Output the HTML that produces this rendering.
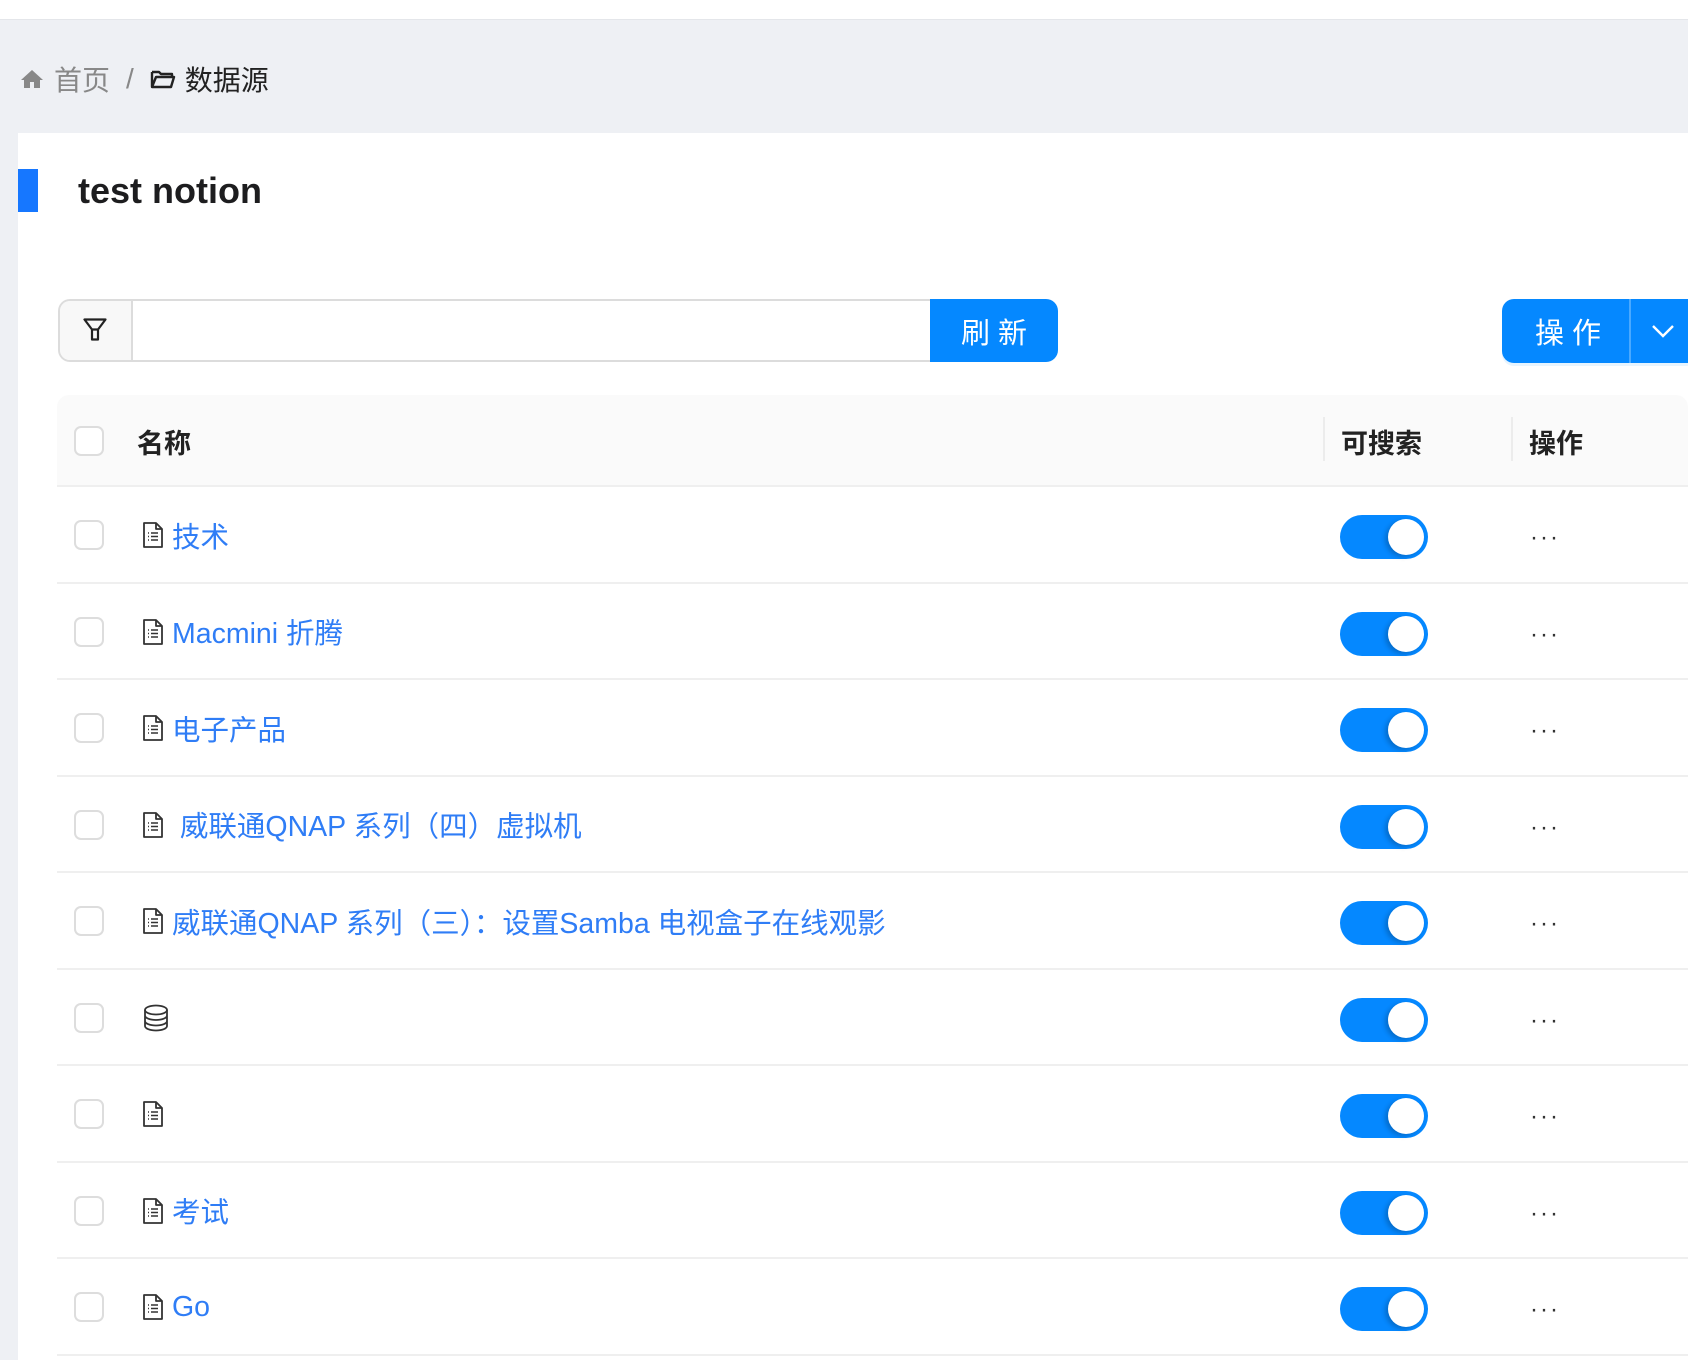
<!DOCTYPE html>
<html><head><meta charset="utf-8"><style>
*{box-sizing:border-box;margin:0;padding:0}
body{width:1688px;height:1360px;overflow:hidden;background:#eef0f4;font-family:"Liberation Sans","Noto Sans CJK SC",sans-serif;position:relative}
.top{position:absolute;left:0;top:0;width:1688px;height:20px;background:#fff;border-bottom:1px solid #e4e6ea}
.bc{position:absolute;left:20px;top:59px;height:40px;display:flex;align-items:center;font-size:28px;color:#888}
.panel{position:absolute;left:18px;top:133px;width:1670px;height:1227px;background:#fff}
.bar{position:absolute;left:18px;top:169px;width:20px;height:43px;background:#1677ff}
.title{position:absolute;left:78px;top:168px;font-size:36px;font-weight:bold;color:#1d1d1f;line-height:46px}
.search{position:absolute;left:58px;top:299px;width:873px;height:63px;border:2px solid #dcdcdc;border-right:none;border-radius:12px 0 0 12px;background:#fff}
.addon{position:absolute;left:0;top:0;width:73px;height:59px;background:#f8f8f8;border-right:2px solid #dcdcdc;border-radius:10px 0 0 10px}
.btn{position:absolute;background:#0588ff;color:#fff;font-size:29px;display:flex;align-items:center;justify-content:center;letter-spacing:8px}
.hdr{position:absolute;left:57px;top:395px;width:1631px;height:92px;background:#fafafa;border-radius:12px 12px 0 0;border-bottom:2px solid #efefef}
.cb{position:absolute;width:30px;height:30px;border:2px solid #ddd;border-radius:7px;background:#fff}
.ht{position:absolute;font-size:27px;font-weight:bold;color:#222;top:27px}
.sep{position:absolute;top:22px;width:2px;height:44px;background:#ececec}
.row{position:absolute;left:57px;width:1631px;height:96.5px;border-bottom:2px solid #efefef}
.name{position:absolute;left:86px;top:0;height:96px;display:flex;align-items:center;font-size:28.5px;color:#2f7df6}
.name svg{margin-right:9px}
.tg{position:absolute;left:1283px;top:28px;width:88px;height:44px;border-radius:22px;background:#0588ff}
.tg i{position:absolute;right:4px;top:4px;width:36px;height:36px;border-radius:50%;background:#fff;box-shadow:-3px 2px 5px rgba(0,0,0,.2)}
.dots{position:absolute;left:1473px;top:39px;font-size:24px;color:#333;letter-spacing:2px;line-height:24px}
</style></head><body>
<div class="top"></div>
<div class="bc">
<svg width="24" height="22" viewBox="0 0 24 22"><path d="M12 2L1 12h3v8h6v-6h4v6h6v-8h3z" fill="#888"/></svg>
<span style="margin-left:10px">首页</span>
<span style="margin:0 16px 0 16px">/</span>
<svg width="26" height="20" viewBox="0 0 26 20"><path d="M2 3h7l2 2h11v3M2 3v15h19l3-10H6L2 18" fill="none" stroke="#222" stroke-width="2.4" stroke-linejoin="round"/></svg>
<span style="margin-left:9px;color:#222">数据源</span>
</div>
<div class="panel"></div>
<div class="bar"></div>
<div class="title">test notion</div>
<div class="search"><div class="addon"><svg style="position:absolute;left:23px;top:17px" width="24" height="24" viewBox="0 0 24 24"><path d="M1.5 1.5h21l-7.5 10v0H9z M9 11.5h6v10H9z" fill="none" stroke="#222" stroke-width="2.2" stroke-linejoin="round"/></svg></div></div>
<div class="btn" style="left:930px;top:299px;width:128px;height:63px;border-radius:0 12px 12px 0;padding-left:8px">刷新</div>
<div class="btn" style="left:1502px;top:299px;width:186px;height:64px;border-radius:12px 0 0 12px;justify-content:flex-start;padding-left:33px;box-shadow:0 3px 0 #e6f4ff">操作<span style="position:absolute;left:127px;top:0;width:2px;height:64px;background:#4aa9ff"></span><svg style="position:absolute;left:149px;top:24px" width="24" height="16" viewBox="0 0 24 16"><path d="M2 3l10 10L22 3" fill="none" stroke="#fff" stroke-width="2.4"/></svg></div>
<div class="hdr">
<div class="cb" style="left:17px;top:31px"></div>
<div class="ht" style="left:80px">名称</div>
<div class="sep" style="left:1266px"></div>
<div class="ht" style="left:1284px">可搜索</div>
<div class="sep" style="left:1454px"></div>
<div class="ht" style="left:1472px">操作</div>
</div>
<div id="rows"></div>
<script>
var doc='<svg width="20" height="26" viewBox="0 0 20 26"><path d="M1 1h12l6 6v18H1z M13 1v6h6" fill="none" stroke="#333" stroke-width="1.8" stroke-linejoin="round"/><path d="M5 11h1M8 11h7M5 14.5h1M8 14.5h7M5 18h1M8 18h7" stroke="#333" stroke-width="1.5"/></svg>';
var db='<svg width="26" height="28" viewBox="0 0 26 28"><ellipse cx="13" cy="6" rx="11" ry="4.5" fill="none" stroke="#333" stroke-width="1.8"/><path d="M2 6v16c0 2.5 5 4.5 11 4.5s11-2 11-4.5V6M2 11.5c0 2.5 5 4.5 11 4.5s11-2 11-4.5M2 17c0 2.5 5 4.5 11 4.5s11-2 11-4.5" fill="none" stroke="#333" stroke-width="1.8"/></svg>';
var items=[[doc,'技术'],[doc,'Macmini 折腾'],[doc,'电子产品'],[doc,'&nbsp;威联通QNAP 系列（四）虚拟机'],[doc,'威联通QNAP 系列（三）：设置Samba 电视盒子在线观影'],[db,''],[doc,''],[doc,'考试'],[doc,'Go']];
var h='';
for(var i=0;i<items.length;i++){
var t=487+i*96.5;
h+='<div class="row" style="top:'+t+'px"><div class="cb" style="left:17px;top:33px"></div><div class="name">'+items[i][0]+'<span>'+items[i][1]+'</span></div><div class="tg"><i></i></div><div class="dots">···</div></div>';
}
document.getElementById('rows').innerHTML=h;
</script>
</body></html>
